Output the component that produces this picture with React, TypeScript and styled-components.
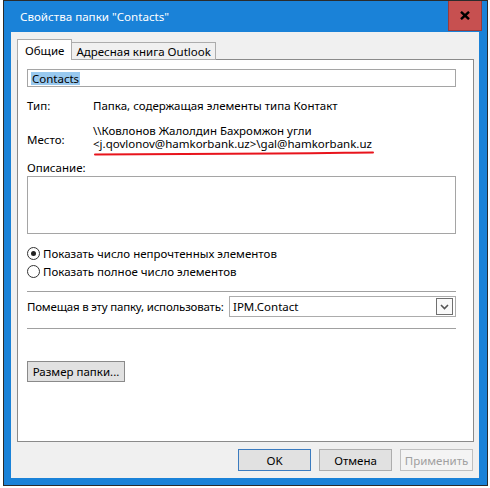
import React from "react";
import styled, { createGlobalStyle } from "styled-components";

const Global = createGlobalStyle`
  html, body { margin: 0; padding: 0; background: #ffffff; }
  body { font-family: "Noto Sans", "Segoe UI", Arial, sans-serif; font-size: 11.5px; color: #000; }
  * { box-sizing: border-box; }
`;

const Window = styled.div`
  margin-left: 3px;
  width: 485px;
  height: 486px;
  border: 1px solid #2b2b2b;
  background: #1a82d8;
  display: flex;
  flex-direction: column;
`;

const TitleBar = styled.div`
  height: 31px;
  display: flex;
  align-items: flex-start;
  padding-left: 16px;
`;

const Title = styled.div`
  flex: 1;
  color: #fff;
  font-size: 11.6px;
  line-height: 31px;
`;

const CloseBtn = styled.div`
  width: 34px;
  height: 30px;
  margin-right: 5px;
  background: #c75050;
  border: 1px solid #9b3a3a;
  border-top: none;
  display: flex;
  align-items: center;
  justify-content: center;
`;

const Frame = styled.div`
  padding: 0 8px 7px 7px;
`;

const Client = styled.div`
  width: 468px;
  height: 446px;
  background: #f0f0f0;
  padding: 7px 5px 0 6px;
  display: flex;
  flex-direction: column;
`;

const TabStrip = styled.div`
  display: flex;
  align-items: flex-end;
  height: 21px;
  position: relative;
  z-index: 1;
`;

const Tab = styled.div<{ $active?: boolean }>`
  height: ${(p) => (p.$active ? "21px" : "18px")};
  margin-left: ${(p) => (p.$active ? "0" : "-1px")};
  padding: 0 ${(p) => (p.$active ? "7px" : "4px")};
  border: 1px solid #acacac;
  border-bottom: ${(p) => (p.$active ? "none" : "1px solid #acacac")};
  background: ${(p) => (p.$active ? "#fff" : "#f0f0f0")};
  display: flex;
  align-items: center;
  padding-top: ${(p) => (p.$active ? "0" : "1px")};
  line-height: 15px;
  white-space: nowrap;
  z-index: ${(p) => (p.$active ? 2 : 1)};
`;

const Panel = styled.div`
  margin-top: -1px;
  height: 383px;
  background: #fff;
  border: 1px solid #8a8a8a;
  padding: 9px 17px 0 9px;
  display: flex;
  flex-direction: column;
`;

const NameInput = styled.div`
  height: 18px;
  border: 1px solid #a5a5a5;
  padding: 1px 3px;
  display: flex;
  align-items: center;
`;

const Selected = styled.span`
  background: #99c9ef;
  line-height: 13px;
  padding: 0 1px;
`;

const InfoRow = styled.div<{ $mt: number }>`
  display: flex;
  align-items: center;
  margin-top: ${(p) => p.$mt}px;
  line-height: 15px;
`;

const Label = styled.div`
  width: 66px;
  flex-shrink: 0;
`;

const Value = styled.div`
  position: relative;
  line-height: 13px;
  padding-bottom: 5px;
`;

const ValueLine = styled.div`
  white-space: nowrap;
`;

const Underline = styled.svg`
  position: absolute;
  left: 1px;
  top: 27px;
  overflow: visible;
`;

const Caption = styled.div`
  margin-top: 5px;
  line-height: 15px;
`;

const TextArea = styled.div`
  margin-top: 1px;
  height: 58px;
  border: 1px solid #a5a5a5;
`;

const RadioRow = styled.div<{ $mt: number }>`
  display: flex;
  align-items: center;
  height: 18px;
  margin-top: ${(p) => p.$mt}px;
  gap: 3px;
`;

const RadioCircle = styled.span<{ $checked?: boolean }>`
  width: 13px;
  height: 13px;
  border-radius: 50%;
  border: 1px solid #333;
  background: #fff;
  display: flex;
  align-items: center;
  justify-content: center;
  &::after {
    content: "";
    width: 5px;
    height: 5px;
    border-radius: 50%;
    background: ${(p) => (p.$checked ? "#222" : "transparent")};
  }
`;

const Separator = styled.div<{ $mt: number }>`
  height: 1px;
  background: #a0a0a0;
  margin-top: ${(p) => p.$mt}px;
`;

const ComboRow = styled.div`
  display: flex;
  align-items: center;
  justify-content: space-between;
  margin-top: 4px;
  height: 21px;
  white-space: nowrap;
`;

const ComboLabel = styled.span`
  letter-spacing: -0.2px;
`;

const Combo = styled.div`
  width: 227px;
  flex-shrink: 0;
  height: 21px;
  border: 1px solid #acacac;
  background: #fff;
  display: flex;
  align-items: center;
  justify-content: space-between;
  padding: 0 2px 0 3px;
`;

const DropBtn = styled.div`
  width: 17px;
  height: 17px;
  border: 1px solid #707070;
  background: #fafafa;
  display: flex;
  align-items: center;
  justify-content: center;
`;

const Button = styled.div<{ $variant?: "default" | "disabled" | "normal" }>`
  height: 22px;
  display: flex;
  align-items: center;
  justify-content: center;
  white-space: nowrap;
  background: ${(p) => (p.$variant === "disabled" ? "#f4f4f4" : "#e1e1e1")};
  border: 1px solid
    ${(p) => (p.$variant === "default" ? "#3b7bbf" : p.$variant === "disabled" ? "#bfbfbf" : "#adadad")};
  color: ${(p) => (p.$variant === "disabled" ? "#a0a0a0" : "#000")};
`;

const SizeButton = styled(Button)`
  width: 98px;
  margin-top: 32px;
  height: 21px;
  border-color: #8a8a8a;
`;

const Footer = styled.div`
  display: flex;
  justify-content: flex-end;
  gap: 8px;
  margin-top: 7px;
  padding-right: 1px;
`;

const DialogButton = styled(Button)`
  width: 73px;
`;

export default function App() {
  return (
    <>
      <Global />
      <Window>
        <TitleBar>
          <Title>Свойства папки "Contacts"</Title>
          <CloseBtn>
            <svg width="10" height="9" viewBox="0 0 10 9">
              <path d="M1 0.8 L9 8.2 M9 0.8 L1 8.2" stroke="#000" strokeWidth="2.4" />
            </svg>
          </CloseBtn>
        </TitleBar>
        <Frame>
          <Client>
            <TabStrip>
              <Tab $active>Общие</Tab>
              <Tab>Адресная книга Outlook</Tab>
            </TabStrip>
            <Panel>
              <NameInput>
                <Selected>Contacts</Selected>
              </NameInput>
              <InfoRow $mt={11}>
                <Label>Тип:</Label>
                <div>Папка, содержащая элементы типа Контакт</div>
              </InfoRow>
              <InfoRow $mt={11}>
                <Label>Место:</Label>
                <Value>
                  <ValueLine>\\Ковлонов Жалолдин Бахромжон угли</ValueLine>
                  <ValueLine>&lt;j.qovlonov@hamkorbank.uz&gt;\gal@hamkorbank.uz</ValueLine>
                  <Underline width="280" height="5" viewBox="0 0 280 5">
                    <path
                      d="M1 3.6 C 60 3.2, 120 2.6, 180 2.4 S 250 1.6, 279 1.4"
                      stroke="#e8141c"
                      strokeWidth="2"
                      fill="none"
                      strokeLinecap="round"
                    />
                  </Underline>
                </Value>
              </InfoRow>
              <Caption>Описание:</Caption>
              <TextArea />
              <RadioRow $mt={10}>
                <RadioCircle $checked />
                <span>Показать число непрочтенных элементов</span>
              </RadioRow>
              <RadioRow $mt={0}>
                <RadioCircle />
                <span>Показать полное число элементов</span>
              </RadioRow>
              <Separator $mt={11} />
              <ComboRow>
                <ComboLabel>Помещая в эту папку, использовать:</ComboLabel>
                <Combo>
                  <span>IPM.Contact</span>
                  <DropBtn>
                    <svg width="9" height="6" viewBox="0 0 9 6">
                      <path d="M1 1 L4.5 4.5 L8 1" stroke="#555" strokeWidth="1.6" fill="none" />
                    </svg>
                  </DropBtn>
                </Combo>
              </ComboRow>
              <Separator $mt={11} />
              <SizeButton>Размер папки...</SizeButton>
            </Panel>
            <Footer>
              <DialogButton $variant="default">OK</DialogButton>
              <DialogButton $variant="normal">Отмена</DialogButton>
              <DialogButton $variant="disabled">Применить</DialogButton>
            </Footer>
          </Client>
        </Frame>
      </Window>
    </>
  );
}
